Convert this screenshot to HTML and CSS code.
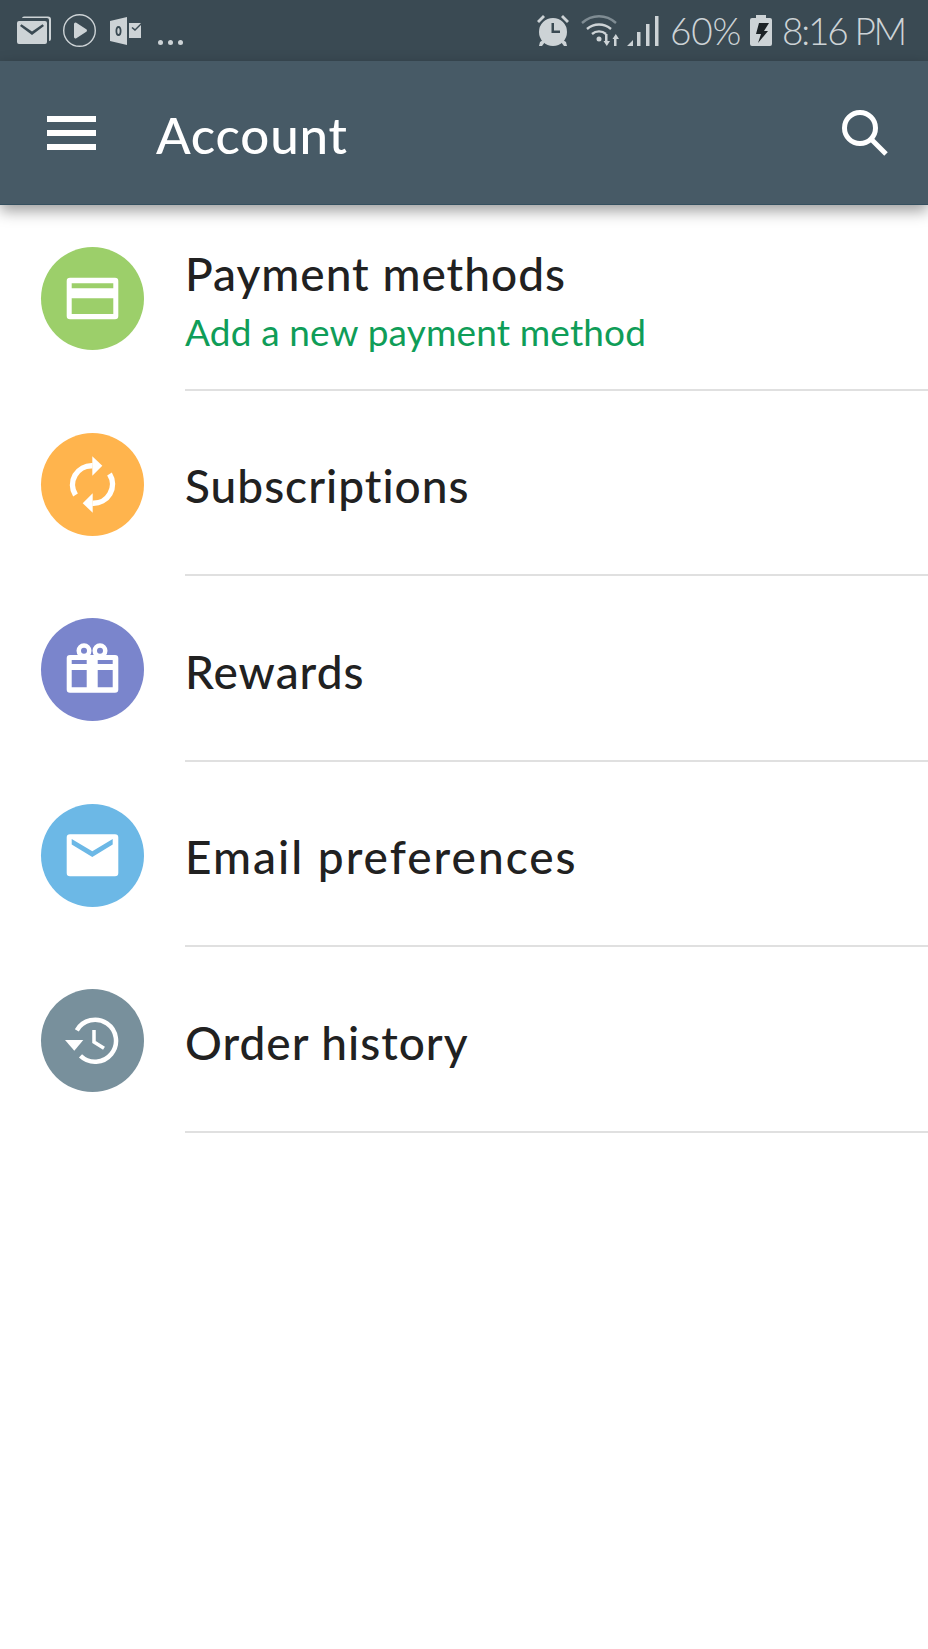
FILE: index.html
```html
<!DOCTYPE html>
<html lang="en">
<head>
<meta charset="utf-8">
<title>Account</title>
<link rel="stylesheet" href="styles.css">
</head>
<body>
<div class="status">
  <div class="status-left">
    <svg class="s-mail" viewBox="0 0 36 30"><path class="fill" d="M6 3.500a2 2 0 0 1 2-2h24a3 3 0 0 1 3 3V24a2 2 0 0 1-2 2v-21a2 2 0 0 0-2-2H6z"/><path class="fill" fill-rule="evenodd" d="M3 6h26a2 2 0 0 1 2 2v19a2 2 0 0 1-2 2H3a2 2 0 0 1-2-2V8a2 2 0 0 1 2-2zM4 11l12 9 12-9-1.500-1.800L16 16.500 5.500 9.200z"/></svg>
    <svg class="s-play" viewBox="0 0 33 33"><circle class="line" cx="16.500" cy="16.500" r="15.800"/><path class="fill" d="M11 10a1.500 1.500 0 0 1 2.300-1.200l10 6.500a1.500 1.500 0 0 1 0 2.500l-10 6.500A1.500 1.500 0 0 1 11 23z"/></svg>
    <svg class="s-outlook" viewBox="0 0 31 28"><path class="fill" fill-rule="evenodd" d="M0 4 17 0v28L0 24zM8.500 9c-2 0-3 2-3 5s1 5 3 5 3-2 3-5-1-5-3-5zm0 2c.8 0 1.200 1.200 1.200 3s-.4 3-1.200 3-1.200-1.200-1.200-3 .4-3 1.200-3z"/><path class="fill" d="M19 6h12l-6 6-2.500-2-1 1 3.500 3 6-6V21H19z"/></svg>
    <div class="s-dots"><span></span><span></span><span></span></div>
  </div>
  <div class="status-right">
    <svg class="s-alarm" viewBox="0 0 32 32"><path class="fill" d="M0 6 6 0l2 2-6 6zM32 6l-6-6-2 2 6 6z"/><path class="fill" fill-rule="evenodd" d="M16 3a14 14 0 1 1 0 28 14 14 0 0 1 0-28zM14.500 8v10H23v-2.500h-6V8z"/><path class="fill" d="m3 27 3-2 2 2-3 4H2zM29 27l-3-2-2 2 3 4h3z"/></svg>
    <svg class="s-wifi" viewBox="0 0 42 32"><path class="dim" d="M1 8C11-1 25-1 35 8"/><path class="line2" d="M6 14c7-6 17-6 24 0M11 19c4-3.500 10-3.500 14 0"/><circle class="fill" cx="18" cy="24" r="2.500"/><path class="fill" d="M24 19h2.500v7H29l-3.200 5-3.300-5H24zM33 31h2.500v-7H38l-3.200-5-3.300 5H33z"/></svg>
    <svg class="s-signal" viewBox="0 0 32 30"><path class="fill" d="M0 30 6 24v6zM10 30V16h3.500v14zM19 30V8h3.500v22zM28 30V0h3.500v30z"/></svg>
    <span class="s-text s-pct">60%</span>
    <svg class="s-battery" viewBox="0 0 22 31"><path class="fill" d="M6 0h10v3h4a2 2 0 0 1 2 2v24a2 2 0 0 1-2 2H2a2 2 0 0 1-2-2V5a2 2 0 0 1 2-2h4z"/><path class="bolt" d="M9 8h10l-5 8h4L8 28l3-9H6z"/></svg>
    <span class="s-text s-time">8:16 PM</span>
  </div>
</div>
<header class="toolbar">
  <div class="menu"><span></span><span></span><span></span></div>
  <h1 class="title">Account</h1>
  <svg class="search" viewBox="0 0 46 46"><circle cx="18" cy="18" r="15.500"/><path d="M29 29l15 15"/></svg>
</header>
<ul class="list">
  <li class="row">
    <div class="badge green"><svg viewBox="0 0 103 103"><path fill-rule="evenodd" d="M29 30.700h45a3.300 3.300 0 0 1 3.300 3.300v35a3.300 3.300 0 0 1-3.300 3.300H29a3.300 3.300 0 0 1-3.300-3.300V34a3.300 3.300 0 0 1 3.300-3.300zM30.700 36.300v5h41.600v-5zM30.700 51.300V67h41.600V51.300z"/></svg></div>
    <div class="body body-two"><div class="name">Payment methods</div><div class="sub">Add a new payment method</div></div>
  </li>
  <li class="row">
    <div class="badge orange"><svg viewBox="0 0 103 103"><path class="arc" d="M34.500 62A19 19 0 0 1 51.500 32.800"/><path d="M51.300 23.300 61.300 32.700 51.300 42.700z"/><path class="arc" d="M68.500 41A19 19 0 0 1 51.500 70.200"/><path d="M51.700 79.700 41.700 70.300 51.700 60.300z"/></svg></div>
    <div class="body"><div class="name">Subscriptions</div></div>
  </li>
  <li class="row">
    <div class="badge indigo"><svg viewBox="0 0 103 103"><path fill-rule="evenodd" d="M43 25.200a7.500 7.500 0 1 1 0 15 7.500 7.500 0 0 1 0-15zM43 29.700a3 3 0 1 0 0 6 3 3 0 0 0 0-6zM59 25.200a7.500 7.500 0 1 1 0 15 7.500 7.500 0 0 1 0-15zM59 29.700a3 3 0 1 0 0 6 3 3 0 0 0 0-6z"/><path fill-rule="evenodd" d="M29 37h45a3.300 3.300 0 0 1 3.300 3.300V71.500a3.300 3.300 0 0 1-3.300 3.300H29a3.300 3.300 0 0 1-3.300-3.300V40.300A3.300 3.300 0 0 1 29 37zM30.700 42v4h15v-4zM56.700 42v4h15v-4zM30.700 52v17.300h15V52zM56.700 52v17.300h15V52z"/></svg></div>
    <div class="body"><div class="name">Rewards</div></div>
  </li>
  <li class="row">
    <div class="badge blue"><svg viewBox="0 0 103 103"><path fill-rule="evenodd" d="M29 30.300h45a3.300 3.300 0 0 1 3.300 3.300V69a3.300 3.300 0 0 1-3.300 3.300H29a3.300 3.300 0 0 1-3.300-3.300V33.600a3.300 3.300 0 0 1 3.300-3.300zM30.700 35v5.500l20.600 12.500 20.400-12.500V35L51.300 47.300z"/></svg></div>
    <div class="body"><div class="name name-wide">Email preferences</div></div>
  </li>
  <li class="row">
    <div class="badge slate"><svg viewBox="0 0 103 103"><path class="arc thin" d="M35.800 41.300A21 21 0 1 1 39.500 66.900"/><path d="M24 51h18.300l-9 10.700z"/><path class="arc hand" d="M53 41v12l10 6.300"/></svg></div>
    <div class="body"><div class="name">Order history</div></div>
  </li>
</ul>
</body>
</html>
```
FILE: styles.css
```css
* { box-sizing: border-box; }
html, body { margin: 0; padding: 0; }
body {
  width: 928px;
  height: 1649px;
  overflow: hidden;
  background: #fff;
  font-family: "Lato", "Noto Sans", sans-serif;
}
.status {
  height: 61px;
  background: #3a4a53;
  display: flex;
  justify-content: space-between;
  padding: 0 23px 0 16px;
}
.fill { fill: #cdd3d6; }
.line { fill: none; stroke: #cdd3d6; stroke-width: 1.4; }
.line2 { fill: none; stroke: #cdd3d6; stroke-width: 2.4; }
.dim { fill: none; stroke: #7f8c93; stroke-width: 2.4; }
.bolt { fill: #1c2225; }
.status-left, .status-right { display: flex; align-items: flex-start; }
.s-mail { width: 36px; height: 30px; margin-top: 15px; }
.s-play { width: 33px; height: 33px; margin: 14px 0 0 11px; }
.s-outlook { width: 31px; height: 28px; margin: 17px 0 0 14px; }
.s-dots { display: flex; gap: 5px; margin: 40px 0 0 17px; }
.s-dots span { width: 5px; height: 5px; border-radius: 50%; background: #cdd3d6; }
.s-alarm { width: 32px; height: 32px; margin-top: 15px; }
.s-wifi { width: 42px; height: 32px; margin: 15px 0 0 12px; }
.s-signal { width: 32px; height: 30px; margin: 16px 0 0 4px; }
.s-battery { width: 22px; height: 31px; margin: 15px 0 0 9px; }
.s-text {
  color: #cdd3d6;
  font-size: 37px;
  font-weight: 300;
  line-height: 61px;
  white-space: nowrap;
}
.s-pct { margin-left: 11px; letter-spacing: -.2px; }
.s-time { margin-left: 10px; letter-spacing: -2.200px; }
.toolbar {
  height: 144px;
  background: #475a66;
  border-bottom: 1px solid #35505f;
  display: flex;
  align-items: center;
  padding: 0 40px 0 47px;
  position: relative;
  box-shadow: 0 6px 14px rgba(0, 0, 0, .38);
}
.menu { width: 49px; display: flex; flex-direction: column; gap: 8px; }
.menu span { height: 6px; background: #fff; }
.title {
  flex: 1;
  margin: 4px 0 0 60px;
  color: #fff;
  font-size: 51px;
  font-weight: 500;
  line-height: 60px;
  letter-spacing: .8px;
}
.search { width: 46px; height: 46px; fill: none; stroke: #fff; stroke-width: 5; }
.list { list-style: none; margin: 0; padding: 0; }
.row { height: 185.500px; display: flex; padding-left: 41px; }
.badge { width: 103px; height: 103px; margin-top: 42px; border-radius: 50%; flex: none; }
.badge svg { display: block; width: 103px; height: 103px; fill: #fff; }
.arc { fill: none; stroke: #fff; stroke-width: 5.500; }
.arc.thin { stroke-width: 4.500; }
.arc.hand { stroke-width: 3.500; }
.green { background: #9ccf6a; }
.orange { background: #ffb44d; }
.indigo { background: #7a85cc; }
.blue { background: #6cb8e6; }
.slate { background: #78909c; }
.body {
  flex: 1;
  margin-left: 41px;
  border-bottom: 2px solid #e0e0e0;
  display: flex;
  flex-direction: column;
  justify-content: center;
  padding-top: 8px;
}
.body-two { padding-top: 12px; }
.name { color: #212121; font-size: 46px; font-weight: 500; line-height: 58px; letter-spacing: 1px; white-space: nowrap; }
.name-wide { letter-spacing: 2px; }
.sub { color: #0f9d58; font-size: 37px; line-height: 58px; letter-spacing: .15px; white-space: nowrap; }
```
